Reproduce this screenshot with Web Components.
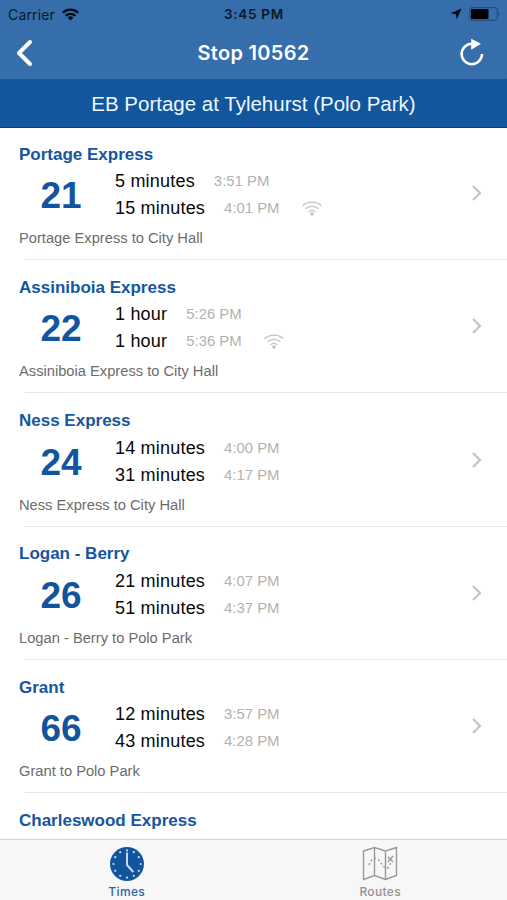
<!DOCTYPE html>
<html lang="en"><head><meta charset="utf-8"><title>Stop 10562</title>
<style>html,body{margin:0;height:100%;overflow:hidden;background:#fff}body{font-family:"Liberation Sans",Arial,sans-serif}</style></head>
<body>
<transit-app></transit-app>
<script>
const define = (name, html, setup) => {
  const t = document.createElement('template');
  t.innerHTML = html;
  customElements.define(name, class extends HTMLElement {
    constructor() {
      super();
      this.attachShadow({mode: 'open'}).append(t.content.cloneNode(true));
    }
    connectedCallback() { if (setup) setup(this, this.shadowRoot); }
  });
};

define('status-bar', `<style>
:host{display:grid;grid-template-columns:1fr auto 1fr;align-items:center;height:27px;padding:0 7px 0 8px;color:#0a1828;font:13.5px/27px Inter,sans-serif}
.l,.r{display:flex;align-items:center}.l{gap:7px}.r{justify-content:flex-end;gap:7px}
.l span{font-size:14px;letter-spacing:.15px}
b{font-weight:600;font-size:13.5px;letter-spacing:.7px;padding-top:1px}svg{display:block}
</style><div class="l"><span>Carrier</span>
<svg width="17" height="13" viewBox="0 0 17 13"><g fill="none" stroke="#020b18" stroke-width="2.3"><path d="M.8 4.8a11 11 0 0 1 15.4 0M3.6 7.8a7 7 0 0 1 9.8 0"/></g><path d="M5.6 9.6a4.2 4.2 0 0 1 5.8 0L8.5 12.5z" fill="#020b18"/></svg></div>
<b>3:45 PM</b>
<div class="r"><svg width="12" height="12" viewBox="0 0 12 12"><path d="M11.5.5 6.7 11.6 6 6.2.5 5.3z" fill="#020b18"/></svg>
<svg width="31" height="14" viewBox="0 0 31 14"><rect x=".7" y=".7" width="27.6" height="12.6" rx="2.5" fill="none" stroke="#234f80" stroke-width="1.2"/><rect x="2" y="2" width="17.5" height="10" rx=".8" fill="#000"/><path d="M29.3 4.5q3 2.5 0 5z" fill="#234f80"/></svg></div>`);

define('nav-bar', `<style>
:host{display:grid;grid-template-columns:60px 1fr 60px;align-items:center;height:52px;color:#fff}
h1{margin:0;text-align:center;font:600 20px/50px Inter,sans-serif;letter-spacing:.3px}
svg{display:block}.b{margin-left:14px}.f{margin-left:12px;margin-top:-1px}
</style><svg class="b" width="20" height="28" viewBox="0 0 20 28"><path d="M16 3 5 14l11 11" fill="none" stroke="#fff" stroke-width="4" stroke-linecap="round" stroke-linejoin="round"/></svg>
<h1><slot></slot></h1>
<svg class="f" width="26" height="30" viewBox="0 0 26 30"><path d="M12.8 5.8A10.2 10.2 0 1 0 23 16" fill="none" stroke="#fff" stroke-width="2.5"/><path d="M12.2.8 22 5.7l-9.8 6z" fill="#fff"/></svg>`);

define('stop-banner', `<style>:host{display:block;box-sizing:border-box;height:49px;background:#12579d;border-bottom:1px solid #123e70;color:#eef6ff;text-align:center;font-size:20.5px;line-height:50px}</style><slot></slot>`);

define('signal-icon', `<style>:host{display:block;margin-left:22px}svg{display:block}</style><svg width="20" height="15" viewBox="0 0 20 15"><g fill="none" stroke="#c2c2c2" stroke-width="1.3"><path d="M.7 4.7a14 14 0 0 1 18.6 0M3.6 7.8a9.7 9.7 0 0 1 12.8 0M6.5 10.8a5.4 5.4 0 0 1 7 0"/></g><circle cx="10" cy="12.9" r="1.6" fill="#bcbcbc"/></svg>`);

define('arrival-time', `<style>
:host{display:flex;align-items:center;height:27px;line-height:27px;white-space:nowrap}
.w{font-size:18px;letter-spacing:.2px;color:#080808}.t{font-size:14.9px;color:#b2b2b2;margin-left:19px}
</style><span class="w"></span><span class="t"></span>`, (el, r) => {
  r.querySelector('.w').textContent = el.getAttribute('wait');
  r.querySelector('.t').textContent = el.getAttribute('clock');
  if (el.hasAttribute('live')) r.append(document.createElement('signal-icon'));
});

define('route-row', `<style>
:host{display:block;box-sizing:border-box;height:133.2px;padding:17.8px 0 0 19px}
h2{margin:0 0 3.5px;font-size:17px;line-height:20px;color:#15569e}
.m{display:grid;grid-template-columns:96px 1fr 40px;align-items:center;height:54px}
.n{text-align:center;width:84px;padding-top:2px;font-size:37px;font-weight:700;color:#12559e}
.d{margin-top:6px;font-size:14.7px;line-height:20px;color:#6c6c6c}
.s{margin:11px 0 0 6px;height:1px;background:#e6e6e6}svg{display:block;margin-left:4px;margin-top:-4px}
</style><h2></h2><div class="m"><div class="n"></div><div><slot></slot></div>
<svg width="12" height="18" viewBox="0 0 12 18"><path d="m2 2 7 7-7 7" fill="none" stroke="#c5c5c9" stroke-width="2.2"/></svg></div><div class="d"></div><div class="s"></div>`, (el, r) => {
  r.querySelector('h2').textContent = el.getAttribute('name');
  r.querySelector('.n').textContent = el.getAttribute('number') || '';
  r.querySelector('.d').textContent = el.getAttribute('to') || '';
  if (!el.hasAttribute('number')) for (const e of r.querySelectorAll('.m,.d,.s')) e.remove();
});

define('tab-item', `<style>
:host{display:flex;flex-direction:column;align-items:center;color:#929292;font:500 12px/14px Inter,sans-serif;letter-spacing:.35px;padding-top:5px}
:host([active]){color:#2d66a7}::slotted(svg){display:block;margin-bottom:2px}
</style><slot name="icon"></slot><span><slot></slot></span>`);

define('tab-bar', `<style>:host{display:grid;grid-template-columns:1fr 1fr;box-sizing:border-box;height:61px;background:#f7f7f7;border-top:1px solid #d5d5d5}</style>
<tab-item active><svg slot="icon" width="38" height="38" viewBox="0 0 38 38"><circle cx="19" cy="19" r="17" fill="#12559d"/><g class="dots" fill="#c7dcf1"></g><path d="M19 7.5V20l6.3 7" fill="none" stroke="#c7dcf1" stroke-width="2"/></svg>Times</tab-item>
<tab-item><svg slot="icon" width="38" height="38" viewBox="0 0 38 38"><g fill="none" stroke="#999" stroke-width="1.4"><path d="m2.5 6 11-3.5 11 3.5 11-3.5v28l-11 4-11-4-11 4zM13.5 2.5v28M24.5 6v28"/><path d="M8 20q3-9 8-6c5 2 4 9 11 9l4-7" stroke-dasharray="2 2.3"/><path d="m27 12 5 5m0-6-5 6"/></g></svg>Routes</tab-item>`, (el, r) => {
  const g = r.querySelector('.dots');
  for (let i = 0; i < 12; i++) {
    const c = document.createElementNS('http://www.w3.org/2000/svg', 'circle'), a = i * Math.PI / 6;
    c.setAttribute('cx', 19 + 13.6 * Math.sin(a)); c.setAttribute('cy', 19 - 13.6 * Math.cos(a)); c.setAttribute('r', 1.1);
    g.append(c);
  }
});

define('transit-app', `<style>
:host{display:flex;flex-direction:column;height:900px;width:507px}
header{background:linear-gradient(#366eab,#376dac)}
main{flex:1;min-height:0;overflow:hidden;margin-top:-1px;position:relative;z-index:0}
header{position:relative;z-index:1}
</style><header><status-bar></status-bar><nav-bar>Stop 10562</nav-bar><stop-banner>EB Portage at Tylehurst (Polo Park)</stop-banner></header>
<main>
<route-row name="Portage Express" number="21" to="Portage Express to City Hall"><arrival-time wait="5 minutes" clock="3:51 PM"></arrival-time><arrival-time wait="15 minutes" clock="4:01 PM" live></arrival-time></route-row>
<route-row name="Assiniboia Express" number="22" to="Assiniboia Express to City Hall"><arrival-time wait="1 hour" clock="5:26 PM"></arrival-time><arrival-time wait="1 hour" clock="5:36 PM" live></arrival-time></route-row>
<route-row name="Ness Express" number="24" to="Ness Express to City Hall"><arrival-time wait="14 minutes" clock="4:00 PM"></arrival-time><arrival-time wait="31 minutes" clock="4:17 PM"></arrival-time></route-row>
<route-row name="Logan - Berry" number="26" to="Logan - Berry to Polo Park"><arrival-time wait="21 minutes" clock="4:07 PM"></arrival-time><arrival-time wait="51 minutes" clock="4:37 PM"></arrival-time></route-row>
<route-row name="Grant" number="66" to="Grant to Polo Park"><arrival-time wait="12 minutes" clock="3:57 PM"></arrival-time><arrival-time wait="43 minutes" clock="4:28 PM"></arrival-time></route-row>
<route-row name="Charleswood Express"></route-row>
</main><tab-bar></tab-bar>`);
</script></body></html>
